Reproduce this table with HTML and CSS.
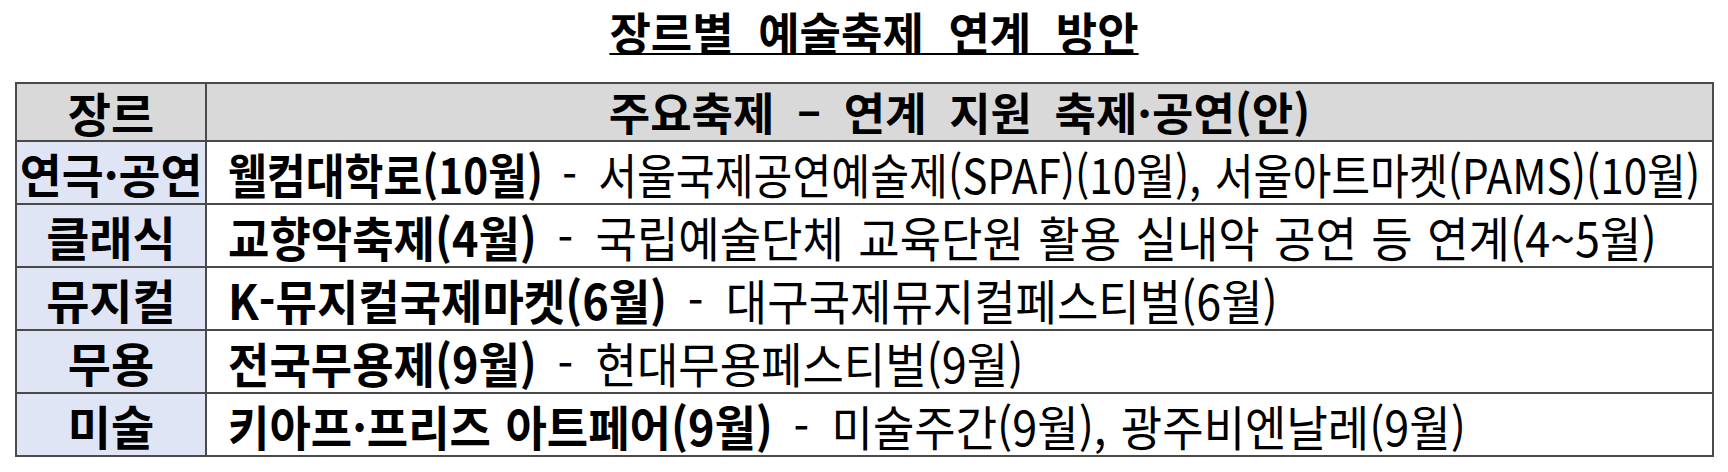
FILE: index.html
```html
<!DOCTYPE html>
<html lang="ko">
<head>
<meta charset="utf-8">
<title>장르별 예술축제 연계 방안</title>
<link rel="stylesheet" href="styles.css">
</head>
<body>
<h1 class="title">장르별 예술축제 연계 방안</h1>
<table class="genre">
  <colgroup>
    <col class="col-genre">
    <col class="col-main">
  </colgroup>
  <thead>
    <tr>
      <th class="head head-genre">장르</th>
      <th class="head">주요축제 – 연계 지원 축제·공연(안)</th>
    </tr>
  </thead>
  <tbody>
    <tr>
      <th class="label"><span class="fit">연극·공연</span></th>
      <td class="body"><span class="line tight"><b>웰컴대학로(10월)</b><span class="dash">-</span>서울국제공연예술제(SPAF)(10월), 서울아트마켓(PAMS)(10월)</span></td>
    </tr>
    <tr>
      <th class="label">클래식</th>
      <td class="body"><span class="line"><b>교향악축제(4월)</b><span class="dash">-</span>국립예술단체 교육단원 활용 실내악 공연 등 연계(4~5월)</span></td>
    </tr>
    <tr>
      <th class="label">뮤지컬</th>
      <td class="body"><span class="line"><b>K-뮤지컬국제마켓(6월)</b><span class="dash">-</span>대구국제뮤지컬페스티벌(6월)</span></td>
    </tr>
    <tr>
      <th class="label">무용</th>
      <td class="body"><span class="line"><b>전국무용제(9월)</b><span class="dash">-</span>현대무용페스티벌(9월)</span></td>
    </tr>
    <tr>
      <th class="label">미술</th>
      <td class="body"><span class="line"><b>키아프·프리즈 아트페어(9월)</b><span class="dash">-</span>미술주간(9월), 광주비엔날레(9월)</span></td>
    </tr>
  </tbody>
</table>
</body>
</html>
```
FILE: styles.css
```css
html, body {
  margin: 0;
  padding: 0;
  background: #ffffff;
}
body {
  font-family: "Noto Sans CJK KR", "Noto Sans", sans-serif;
  color: #000;
}
.title {
  margin: 0;
  padding: 6px 0 0 20px;
  height: 82px;
  box-sizing: border-box;
  text-align: center;
  font-size: 45px;
  font-weight: 700;
  line-height: 52px;
  text-decoration: underline;
  text-decoration-thickness: 2px;
  text-underline-offset: 2px;
  word-spacing: 12px;
}
.genre {
  margin-left: 15px;
  width: 1699px;
  border-collapse: collapse;
  border: 2px solid #1a1a1a;
  table-layout: fixed;
}
.col-genre { width: 190px; }
.genre th, .genre td {
  border: 2px solid #4a4a4a;
  padding: 0;
  white-space: nowrap;
}
.genre .head {
  height: 56px;
  background: #d9d9d9;
  font-size: 45px;
  font-weight: 700;
  text-align: center;
  line-height: 56px;
  word-spacing: 10px;
}
.genre .head-genre {
  font-size: 47px;
}
.genre .label {
  height: 61px;
  background: #dfe5f4;
  font-size: 47px;
  font-weight: 700;
  text-align: center;
  line-height: 60px;
}
.genre .body {
  height: 61px;
  background: #fff;
  font-size: 48px;
  font-weight: 400;
  text-align: left;
  padding-left: 21px;
  line-height: 60px;
}
.line {
  display: inline-block;
  width: 0;
  overflow: visible;
  vertical-align: top;
  transform: scaleX(0.937);
  transform-origin: left center;
  word-spacing: 2px;
}
.line.tight {
  transform: scaleX(0.88);
}
.line b { font-weight: 700; }
.dash {
  margin: 0 24px 0 22px;
}
.fit {
  display: inline-block;
  transform: scaleX(0.97);
}
```
